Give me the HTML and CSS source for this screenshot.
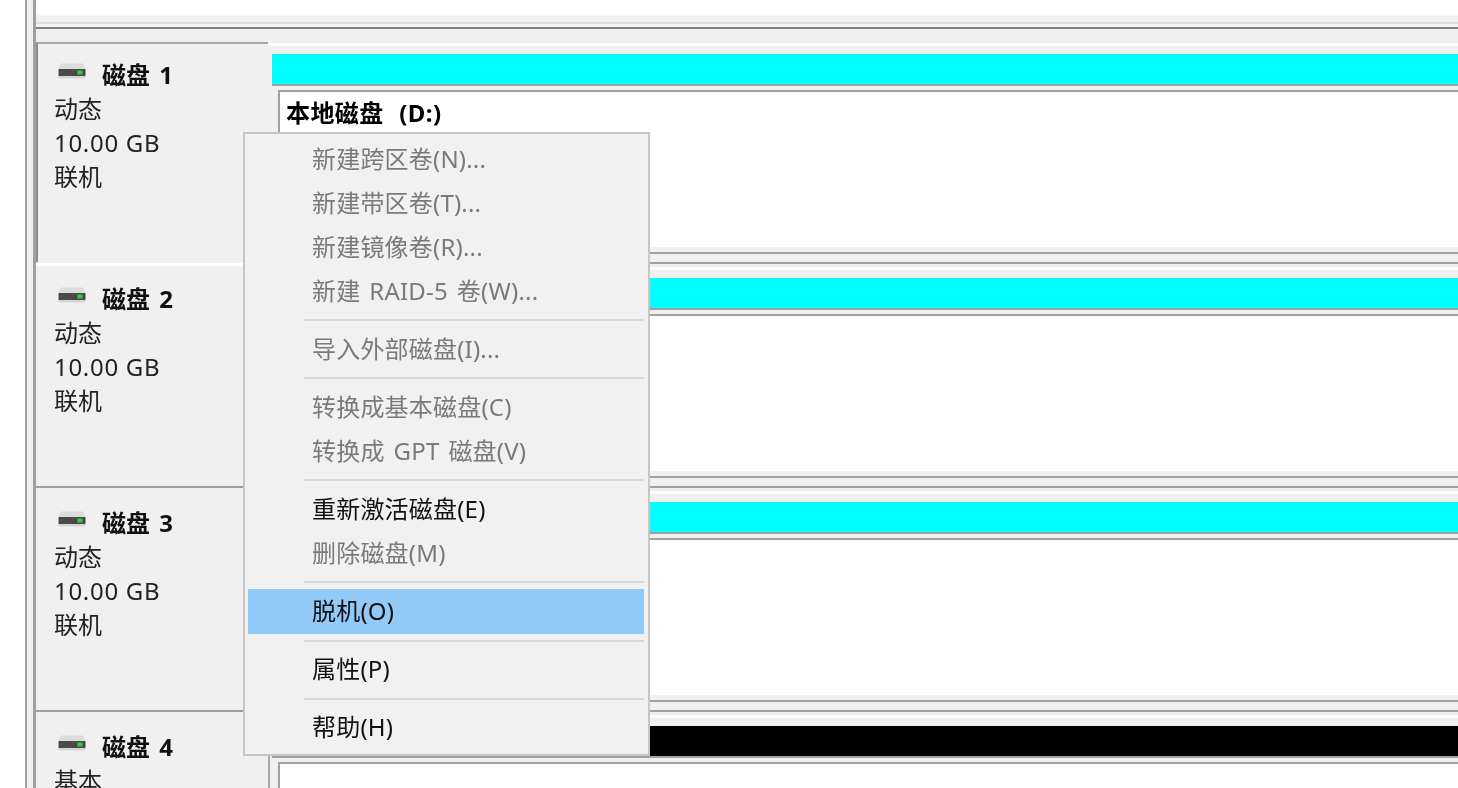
FILE: index.html
```html
<!DOCTYPE html>
<html lang="zh-CN">
<head>
  <meta charset="UTF-8" />
  <title>磁盘管理</title>
  <link rel="stylesheet" href="styles.css">
</head>
<body>
  <svg class="defs" width="0" height="0">
    <symbol id="disk" viewBox="0 0 28 16">
      <path d="M3 0.5h22l2.5 5.5h-27z" fill="#dcdcdc"/>
      <rect x="0.5" y="6" width="27" height="7" fill="#4a4a4a"/>
      <rect x="0.5" y="13" width="27" height="2.5" fill="#d4d4d4"/>
      <rect x="19.5" y="7.5" width="5" height="4" fill="#35d035"/>
    </symbol>
  </svg>

  <div class="screen">
    <div class="gutter"></div>
    <div class="main">
      <div class="top-pane"><div class="top-strip"></div></div>
      <div class="pane-gap"></div>

      <div class="disk-row first">
        <div class="disk-label">
          <div class="disk-name"><svg class="disk-icon"><use href="#disk"/></svg>磁盘 1</div>
          <div>动态</div>
          <div class="size">10.00 GB</div>
          <div>联机</div>
        </div>
        <div class="disk-map">
          <div class="bar cyan"></div>
          <div class="volume"><div class="volume-name">本地磁盘 (D:)</div></div>
          <div class="row-foot"></div>
        </div>
      </div>

      <div class="disk-row">
        <div class="disk-label">
          <div class="disk-name"><svg class="disk-icon"><use href="#disk"/></svg>磁盘 2</div>
          <div>动态</div>
          <div class="size">10.00 GB</div>
          <div>联机</div>
        </div>
        <div class="disk-map">
          <div class="bar cyan"></div>
          <div class="volume"></div>
          <div class="row-foot"></div>
        </div>
      </div>

      <div class="disk-row ruled">
        <div class="disk-label">
          <div class="disk-name"><svg class="disk-icon"><use href="#disk"/></svg>磁盘 3</div>
          <div>动态</div>
          <div class="size">10.00 GB</div>
          <div>联机</div>
        </div>
        <div class="disk-map">
          <div class="bar cyan"></div>
          <div class="volume"></div>
          <div class="row-foot"></div>
        </div>
      </div>

      <div class="disk-row ruled last">
        <div class="disk-label">
          <div class="disk-name"><svg class="disk-icon"><use href="#disk"/></svg>磁盘 4</div>
          <div>基本</div>
          <div class="size">10.00 GB</div>
          <div>联机</div>
        </div>
        <div class="disk-map">
          <div class="bar black"></div>
          <div class="volume"></div>
        </div>
      </div>
    </div>

    <ul class="menu">
      <li class="off">新建跨区卷(N)...</li>
      <li class="off">新建带区卷(T)...</li>
      <li class="off">新建镜像卷(R)...</li>
      <li class="off">新建 RAID-5 卷(W)...</li>
      <li class="sep"></li>
      <li class="off">导入外部磁盘(I)...</li>
      <li class="sep"></li>
      <li class="off">转换成基本磁盘(C)</li>
      <li class="off">转换成 GPT 磁盘(V)</li>
      <li class="sep"></li>
      <li>重新激活磁盘(E)</li>
      <li class="off">删除磁盘(M)</li>
      <li class="sep"></li>
      <li class="active">脱机(O)</li>
      <li class="sep"></li>
      <li>属性(P)</li>
      <li class="sep"></li>
      <li>帮助(H)</li>
    </ul>
  </div>
</body>
</html>
```

FILE: styles.css
```css
html, body {
  margin: 0;
  height: 100%;
  overflow: hidden;
  background: #fff;
}

.defs {
  display: block;
  height: 0;
}

.screen {
  position: relative;
  display: flex;
  height: 788px;
  padding-left: 25px;
  box-sizing: border-box;
  overflow: hidden;
  font-family: "Noto Sans", "Noto Sans CJK SC", sans-serif;
  font-size: 24px;
  color: #222;
  filter: blur(0.45px);
}

.gutter {
  width: 6px;
  flex: none;
  background: #f0f0f0;
  border-left: 2px solid #a0a0a0;
  border-right: 3px solid #a0a0a0;
}

.main {
  flex: 1;
  min-width: 0;
}

.top-pane {
  height: 27px;
  padding-top: 14px;
  box-sizing: border-box;
  background: #fff;
}

.top-strip {
  height: 13px;
  background: #f3f3f3;
  border-top: 2px solid #f8f8f8;
  box-sizing: border-box;
  box-shadow: inset 0 6px 0 #f0f0f0, inset 0 8px 0 #dedede;
}

.pane-gap {
  height: 13px;
  background: #f0f0f0;
  border-top: 2px solid #808080;
}

.disk-row {
  display: flex;
  height: 224px;
  background: #f0f0f0;
}

.disk-label {
  width: 232px;
  height: 227px;
  margin-top: -3px;
  flex: none;
  padding: 16px 0 0 18px;
  box-sizing: border-box;
  line-height: 34px;
  border-top: 3px solid #fff;
  background: #f0f0f0;
}

.first .disk-label {
  height: 220px;
  margin-top: 0;
  padding: 14px 0 0 16px;
  border-top: 2px solid #a8a8a8;
  border-left: 2px solid #8c8c8c;
}

.ruled .disk-label {
  margin-top: -4px;
  padding-top: 18px;
  border-top: 2px solid #a0a0a0;
}

.last .disk-label {
  box-shadow: 2px 0 0 #a8a8a8;
}

.disk-name {
  display: flex;
  align-items: center;
  font-weight: 700;
  color: #111;
  word-spacing: 3px;
  white-space: pre;
}

.size {
  letter-spacing: 0.7px;
}

.disk-icon {
  width: 28px;
  height: 16px;
  margin: -9px 16px 0 4px;
}

.disk-map {
  flex: 1;
  min-width: 0;
  padding: 4px 0 0 4px;
  border-top: 3px solid #fff;
  box-sizing: border-box;
  margin-top: 1px;
}

.bar {
  height: 30px;
  margin-top: 4px;
  border-bottom: 2px solid #a0a0a0;
}

.cyan {
  background: #0ff;
}

.black {
  background: #000;
}

.volume {
  height: 157px;
  margin: 4px 0 0 6px;
  box-sizing: border-box;
  background: #fff;
  border-top: 2px solid #a0a0a0;
  border-left: 2px solid #a0a0a0;
  padding: 4px 0 0 6px;
}

.volume-name {
  font-weight: 700;
  color: #000;
  line-height: 34px;
  word-spacing: 9px;
  letter-spacing: 0.4px;
}

.row-foot {
  height: 8px;
  margin: 5px 0 0 -4px;
  border-top: 2px solid #a0a0a0;
  border-bottom: 2px solid #a0a0a0;
}

.menu {
  position: absolute;
  left: 243px;
  top: 132px;
  width: 407px;
  height: 624px;
  box-sizing: border-box;
  margin: 0;
  padding: 3px 4px 0 3px;
  list-style: none;
  background: #f1f1f1;
  border: 2px solid #c6c6c6;
  font-size: 24px;
  color: #111;
  letter-spacing: 0.2px;
  word-spacing: 2.5px;
}

.menu li {
  height: 44px;
  line-height: 43px;
  padding-left: 64px;
}

.menu .off {
  color: #7a7a7a;
}

.menu .active {
  background: #91c9f7;
  height: 45px;
}

.menu .active ~ li {
  line-height: 41px;
}

.menu .sep {
  height: 2px;
  margin: 6px 0 6px 56px;
  padding: 0;
  background: #d8d8d8;
}
```
